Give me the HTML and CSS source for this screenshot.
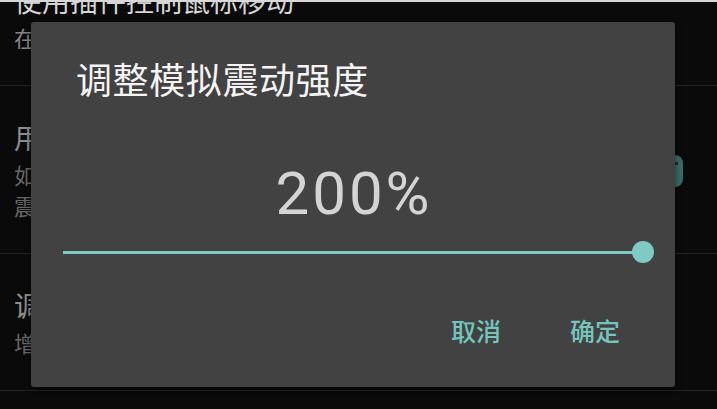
FILE: index.html
```html
<!DOCTYPE html>
<html lang="zh-CN">
<head>
<meta charset="utf-8">
<title>调整模拟震动强度</title>
<link rel="stylesheet" href="styles.css">
</head>
<body>
<div class="screen">
  <div class="list">
    <div class="item">
      <div class="texts">
        <div class="item-title">使用插件控制鼠标移动</div>
        <div class="item-sub">在游戏中使用插件控制鼠标的移动</div>
      </div>
    </div>
    <div class="item disabled">
      <div class="texts">
        <div class="item-title">用震动模拟触觉反馈</div>
        <div class="item-sub">如果设备支持，按下按键时将会产生</div>
        <div class="item-sub">震动反馈</div>
      </div>
      <div class="switch"><span class="knob"></span></div>
    </div>
    <div class="item disabled">
      <div class="texts">
        <div class="item-title">调整模拟震动强度</div>
        <div class="item-sub">增强或减弱模拟震动的强度</div>
      </div>
    </div>
  </div>
</div>

<div class="dialog">
  <div class="dialog-title">调整模拟震动强度</div>
  <div class="value">200%</div>
  <div class="slider">
    <div class="track"></div>
    <div class="thumb"></div>
  </div>
  <div class="actions">
    <span class="btn">取消</span>
    <span class="btn">确定</span>
  </div>
</div>
</body>
</html>
```

FILE: styles.css
```css
html, body {
  margin: 0;
  padding: 0;
  width: 717px;
  height: 409px;
  overflow: hidden;
  background: #0a0a0a;
  font-family: "Noto Sans CJK SC", "Noto Sans", sans-serif;
}

.screen {
  height: 407px;
  border-top: 2px solid #d8d8d8;
  overflow: hidden;
}

.list {
  margin-top: -53px;
}

.item {
  display: flex;
  align-items: center;
  padding: 34px 34px 32px 14px;
  border-bottom: 1px solid #222222;
}

.texts {
  flex: 1;
  display: flex;
  flex-direction: column;
  gap: 5px;
}

.item-title {
  font-size: 28px;
  line-height: 34px;
  color: #d4d4d4;
  white-space: nowrap;
}

.item-sub {
  font-size: 22px;
  line-height: 31px;
  color: #858585;
  white-space: nowrap;
  margin-bottom: -5px;
}

.item-sub:last-child {
  margin-bottom: 0;
}

.disabled .item-title {
  color: #8e8e8e;
}

.disabled .item-sub {
  color: #676767;
}

.switch {
  width: 44px;
  height: 32px;
  border-radius: 8px;
  background: #3b6964;
  position: relative;
}

.knob {
  position: absolute;
  right: 5px;
  top: 7px;
  width: 3px;
  height: 3px;
  background: #1d2f2d;
}

.dialog {
  position: absolute;
  left: 31px;
  top: 22px;
  width: 644px;
  height: 365px;
  box-sizing: border-box;
  background: #424242;
  border-radius: 3px;
  box-shadow: 0 2px 6px rgba(0, 0, 0, 0.5);
  padding-top: 35px;
  display: flex;
  flex-direction: column;
}

.dialog-title {
  font-size: 36px;
  line-height: 43px;
  color: #f4f4f4;
  padding-left: 45px;
  letter-spacing: 0.6px;
}

.value {
  margin-top: 58px;
  font-family: Roboto, "Noto Sans", sans-serif;
  font-size: 60px;
  line-height: 72px;
  color: #d4d4d4;
  text-align: center;
  letter-spacing: 3px;
  padding-left: 2px;
}

.slider {
  margin-top: 11px;
  height: 22px;
  padding: 0 21px 0 32px;
  display: flex;
  align-items: center;
}

.track {
  flex: 1;
  height: 3px;
  background: #7ecbc3;
}

.thumb {
  width: 22px;
  height: 22px;
  border-radius: 50%;
  background: #7ecbc3;
  margin-left: -11px;
}

.actions {
  margin-top: 52px;
  display: flex;
  justify-content: flex-end;
  gap: 69px;
  padding-right: 55px;
}

.btn {
  font-size: 25px;
  line-height: 30px;
  color: #74c6bc;
  font-weight: 500;
}
```
